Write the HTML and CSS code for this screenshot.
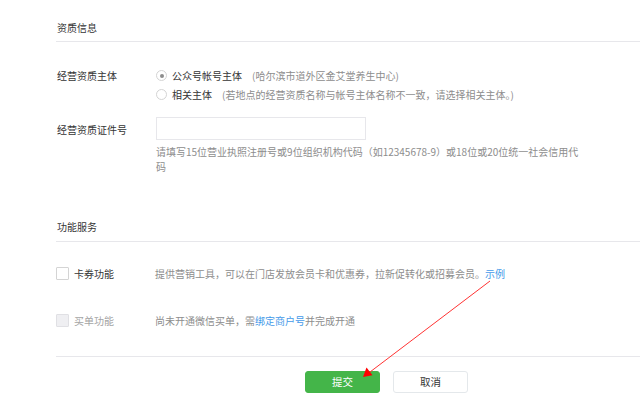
FILE: index.html
```html
<!DOCTYPE html>
<html lang="zh-CN">
<head>
<meta charset="utf-8">
<title>资质信息</title>
<link rel="stylesheet" href="styles.css">
</head>
<body>
<div class="page">
  <div class="section-title">资质信息</div>

  <div class="form-row row-subject">
    <div class="label">经营资质主体</div>
    <div class="control">
      <div class="radio-line">
        <span class="radio checked"></span>
        <span class="radio-text">公众号帐号主体</span>
        <span class="paren">(哈尔滨市道外区金艾堂养生中心)</span>
      </div>
      <div class="radio-line">
        <span class="radio"></span>
        <span class="radio-text">相关主体</span>
        <span class="paren">(若地点的经营资质名称与帐号主体名称不一致，请选择相关主体。)</span>
      </div>
    </div>
  </div>

  <div class="form-row row-cert">
    <div class="label label-input">经营资质证件号</div>
    <div class="control">
      <div class="input"></div>
      <p class="tips">请填写15位营业执照注册号或9位组织机构代码（如12345678-9）或18位或20位统一社会信用代码</p>
    </div>
  </div>

  <div class="section-title section-second">功能服务</div>

  <div class="func-row first">
    <div class="func-label"><span class="checkbox"></span><span>卡券功能</span></div>
    <div class="func-desc">提供营销工具，可以在门店发放会员卡和优惠券，拉新促转化或招募会员。<a class="link">示例</a></div>
  </div>
  <div class="func-row disabled">
    <div class="func-label"><span class="checkbox"></span><span>买单功能</span></div>
    <div class="func-desc">尚未开通微信买单，需<a class="link">绑定商户号</a>并完成开通</div>
  </div>

  <div class="footer">
    <button class="btn btn-primary">提交</button>
    <button class="btn btn-default">取消</button>
  </div>
</div>

<svg class="arrow" width="640" height="412" viewBox="0 0 640 412">
  <line x1="490" y1="281" x2="370" y2="372" stroke="#f33" stroke-width="1"/>
  <polygon points="363,377 366.5,367.5 372.5,375.3" fill="#f00"/>
</svg>
</body>
</html>
```

FILE: styles.css
```css
html, body {
  margin: 0;
  padding: 0;
  background: #fff;
}

body {
  font-family: "Noto Sans CJK SC", "Microsoft YaHei", sans-serif;
  font-size: 10px;
  color: #353535;
  overflow: hidden;
  width: 640px;
  height: 412px;
  position: relative;
}

.page {
  padding-left: 56px;
}

.section-title {
  line-height: 16px;
  padding-top: 20px;
  padding-bottom: 5px;
  padding-left: 1px;
  border-bottom: 1px solid #e7e7eb;
  color: #353535;
}

.section-second {
  margin-top: 45px;
  padding-top: 0;
  padding-bottom: 6px;
}

.form-row {
  display: flex;
}

.label {
  width: 99px;
  padding-left: 1px;
  line-height: 19px;
  flex-shrink: 0;
}

.row-subject {
  margin-top: 24px;
}

.radio-line {
  display: flex;
  align-items: center;
  height: 19px;
}

.radio {
  width: 9px;
  height: 9px;
  border: 1px solid #d4d4d4;
  border-radius: 50%;
  margin-left: 0;
  margin-right: 5px;
  position: relative;
  box-sizing: content-box;
}

.radio.checked::after {
  content: "";
  position: absolute;
  left: 2.5px;
  top: 2.5px;
  width: 4px;
  height: 4px;
  border-radius: 50%;
  background: #8d8d8d;
}

.radio-text {
  color: #353535;
}

.paren {
  color: #8d8d8d;
  margin-left: 10px;
}

.row-cert {
  margin-top: 13px;
}

.label-input {
  line-height: 25px;
}

.input {
  width: 208px;
  height: 21px;
  border: 1px solid #e7e7eb;
}

.tips {
  margin: 4px 0 0;
  width: 425px;
  line-height: 15px;
  color: #8d8d8d;
}

.func-row {
  display: flex;
  line-height: 19px;
  height: 19px;
}

.func-row.first {
  margin-top: 22px;
}

.func-row.disabled {
  margin-top: 28px;
}

.func-label {
  width: 99px;
  display: flex;
  align-items: center;
  flex-shrink: 0;
}

.checkbox {
  width: 11px;
  height: 11px;
  border: 1px solid #d4d4d4;
  border-radius: 1px;
  margin-right: 5px;
  background: #fff;
}

.disabled .checkbox {
  background: #efeff2;
  border-color: #e0e0e4;
}

.disabled .func-label {
  color: #a4a4a4;
}

.func-desc {
  color: #8d8d8d;
}

.link {
  color: #459ae9;
  text-decoration: none;
}

.footer {
  margin-top: 26px;
  border-top: 1px solid #e7e7eb;
  padding-top: 14px;
  padding-left: 249px;
  display: flex;
  gap: 13px;
}

.btn {
  width: 75px;
  height: 22px;
  border-radius: 3px;
  font-family: inherit;
  font-size: 10.5px;
  padding: 0;
  line-height: 20px;
  cursor: pointer;
}

.btn-primary {
  background: #44b549;
  border: 1px solid #44b549;
  color: #fff;
}

.btn-default {
  background: #fff;
  border: 1px solid #e4e8eb;
  color: #353535;
}

.arrow {
  position: absolute;
  left: 0;
  top: 0;
  pointer-events: none;
}
```
